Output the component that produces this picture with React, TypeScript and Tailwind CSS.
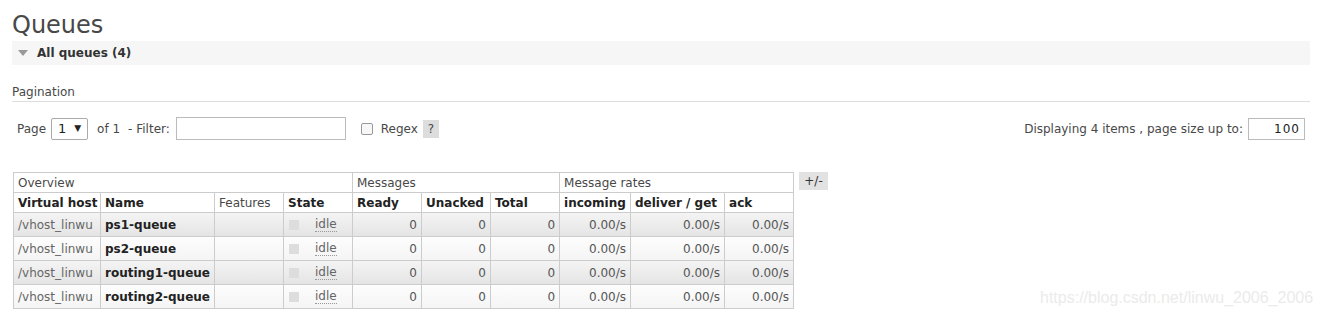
import React from "react";

const rows = [
  { vhost: "/vhost_linwu", name: "ps1-queue" },
  { vhost: "/vhost_linwu", name: "ps2-queue" },
  { vhost: "/vhost_linwu", name: "routing1-queue" },
  { vhost: "/vhost_linwu", name: "routing2-queue" },
];

const widths = [87, 114, 69, 69, 69, 69, 69, 71, 94, 69];

export default function App() {
  return (
    <div
      className="relative w-[1323px] h-[317px] bg-white overflow-hidden text-[12px] text-[#484848]"
      style={{ fontFamily: "'DejaVu Sans', Verdana, sans-serif" }}
    >
      <div className="pl-[12px] pr-[13px]">
        <h1 className="text-[24px] leading-[28px] pt-[11px] pb-[2px] text-[#484848]">Queues</h1>

        <div className="h-[24px] bg-[#f6f6f6] flex items-center pl-[6px]">
          <span className="w-0 h-0 border-l-[5px] border-r-[5px] border-t-[6px] border-l-transparent border-r-transparent border-t-[#999] mr-[9px]"></span>
          <span className="font-bold text-[#333]">All queues (4)</span>
        </div>

        <div className="mt-[20px] pb-[2px] border-b border-[#ddd] leading-[14px]">Pagination</div>

        <div className="flex items-center justify-between mt-[15px] pl-[5px] pr-[5px]">
          <div className="flex items-center">
            <span>Page</span>
            <div className="ml-[5px] w-[37px] h-[22px] border border-[#aaa] rounded-[2px] flex items-center pl-[6px] text-[#222]">
              <span className="text-[13px]">1</span>
              <span className="ml-[8px] text-[9px]">▼</span>
            </div>
            <span className="ml-[9px]">of 1</span>
            <span className="ml-[8px]">- Filter:</span>
            <div className="ml-[6px] w-[170px] h-[23px] border border-[#bbb]"></div>
            <div className="ml-[15px] w-[12px] h-[12px] border border-[#999] rounded-[2px] bg-[#f7f7f7]"></div>
            <span className="ml-[8px]">Regex</span>
            <span className="ml-[5px] w-[16px] h-[18px] bg-[#ddd] flex items-center justify-center">?</span>
          </div>
          <div className="flex items-center">
            <span>Displaying 4 items , page size up to:</span>
            <div className="ml-[5px] w-[57px] h-[22px] border border-[#bbb] flex items-center justify-end pr-[4px] tracking-[1px] text-[#222]">
              100
            </div>
          </div>
        </div>

        <div className="flex items-start mt-[32px] pl-[1px]">
          <table className="border-collapse table-fixed w-[781px]">
            <colgroup>
              {widths.map((w, i) => (
                <col key={i} style={{ width: w }} />
              ))}
            </colgroup>
            <thead>
              <tr className="h-[20px]">
                <th colSpan={4} className="border border-[#ccc] text-left font-normal px-[4px] text-[#484848]">Overview</th>
                <th colSpan={3} className="border border-[#ccc] text-left font-normal px-[4px] text-[#484848]">Messages</th>
                <th colSpan={3} className="border border-[#ccc] text-left font-normal px-[4px] text-[#484848]">Message rates</th>
              </tr>
              <tr className="h-[20px] text-[#222]">
                <th className="border border-[#ccc] text-left px-[4px] whitespace-nowrap">Virtual host</th>
                <th className="border border-[#ccc] text-left px-[4px]">Name</th>
                <th className="border border-[#ccc] text-left px-[4px] font-normal text-[#484848]">Features</th>
                <th className="border border-[#ccc] text-left px-[4px]">State</th>
                <th className="border border-[#ccc] text-left px-[4px]">Ready</th>
                <th className="border border-[#ccc] text-left px-[4px]">Unacked</th>
                <th className="border border-[#ccc] text-left px-[4px]">Total</th>
                <th className="border border-[#ccc] text-left px-[4px]">incoming</th>
                <th className="border border-[#ccc] text-left px-[4px] whitespace-nowrap">deliver / get</th>
                <th className="border border-[#ccc] text-left px-[4px]">ack</th>
              </tr>
            </thead>
            <tbody>
              {rows.map((r, i) => (
                <tr
                  key={r.name}
                  className={
                    "h-[24px] " +
                    (i % 2 === 0
                      ? "bg-gradient-to-b from-[#f4f4f4] to-[#e4e4e4]"
                      : "bg-gradient-to-b from-[#fdfdfd] to-[#f4f4f4]")
                  }
                >
                  <td className="border border-[#ccc] px-[4px] text-[#666] whitespace-nowrap">{r.vhost}</td>
                  <td className="border border-[#ccc] px-[4px] font-bold text-[#222] whitespace-nowrap">{r.name}</td>
                  <td className="border border-[#ccc]"></td>
                  <td className="border border-[#ccc] px-[5px]">
                    <div className="flex items-center">
                      <span className="w-[10px] h-[10px] bg-[#ddd]"></span>
                      <span className="ml-[16px] text-[#666] border-b border-dotted border-[#999] leading-[14px]">idle</span>
                    </div>
                  </td>
                  <td className="border border-[#ccc] px-[4px] text-right text-[#555]">0</td>
                  <td className="border border-[#ccc] px-[4px] text-right text-[#555]">0</td>
                  <td className="border border-[#ccc] px-[4px] text-right text-[#555]">0</td>
                  <td className="border border-[#ccc] px-[4px] text-right text-[#555]">0.00/s</td>
                  <td className="border border-[#ccc] px-[4px] text-right text-[#555]">0.00/s</td>
                  <td className="border border-[#ccc] px-[4px] text-right text-[#555]">0.00/s</td>
                </tr>
              ))}
            </tbody>
          </table>
          <span className="ml-[5px] w-[29px] h-[18px] bg-[#e2e2e2] flex items-center justify-center text-[#333]">+/-</span>
        </div>
      </div>

      <div
        className="absolute left-[1040px] top-[288px] text-[16px] leading-[20px] text-[#ebebeb]"
        style={{ fontFamily: "'Liberation Sans', Arial, sans-serif" }}
      >
        https://blog.csdn.net/linwu_2006_2006
      </div>
    </div>
  );
}
